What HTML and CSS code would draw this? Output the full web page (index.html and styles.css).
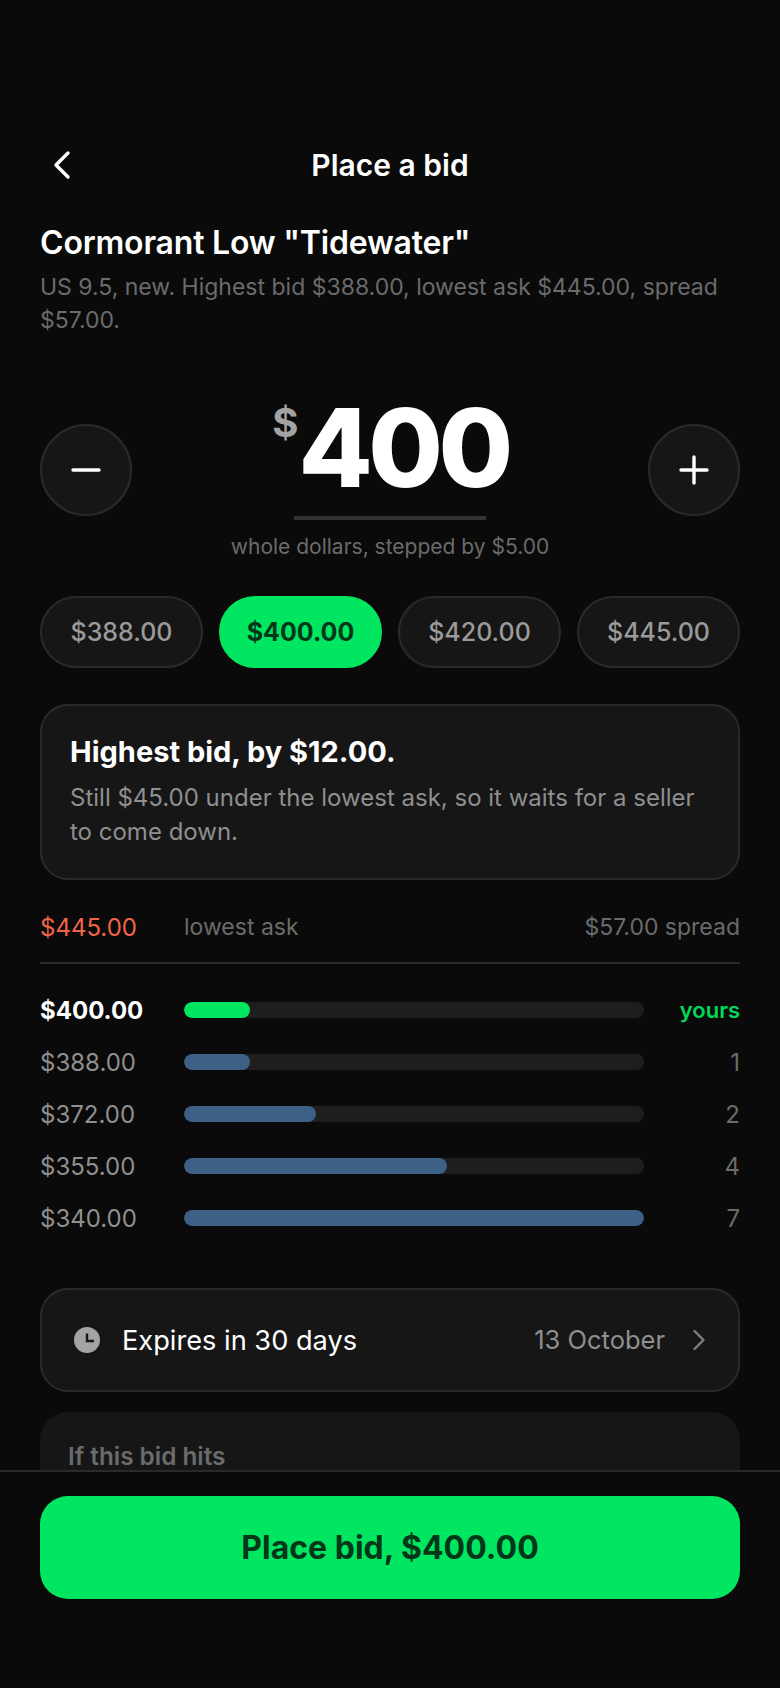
FILE: index.html
```html
<!DOCTYPE html>
<html lang="en">
<head>
    <meta charset="UTF-8">
    <meta name="viewport" content="width=device-width, initial-scale=1.0">
    <title>Place a bid</title>
    <link rel="stylesheet" href="styles.css">
</head>
<body>
    <div class="screen">
        <div class="content">
            <div class="nav">
                <svg class="back" width="28" height="32" viewBox="0 0 28 32" fill="none"><path d="M20 4 8 16l12 12" stroke="#fff" stroke-width="3.4" stroke-linecap="round" stroke-linejoin="round"/></svg>
                <h1>Place a bid</h1>
            </div>

            <h2 class="product">Cormorant Low "Tidewater"</h2>
            <p class="summary">US 9.5, new. Highest bid $388.00, lowest ask $445.00, spread $57.00.</p>

            <div class="stepper">
                <button class="round-btn">
                    <svg width="32" height="32" viewBox="0 0 32 32" fill="none"><path d="M3 16h26" stroke="#fff" stroke-width="3.4" stroke-linecap="round"/></svg>
                </button>
                <div class="amount-wrap">
                    <div class="amount"><span class="currency">$</span><span class="digits">400</span></div>
                    <div class="amount-line"></div>
                </div>
                <button class="round-btn">
                    <svg width="32" height="32" viewBox="0 0 32 32" fill="none"><path d="M3 16h26M16 3v26" stroke="#fff" stroke-width="3.4" stroke-linecap="round"/></svg>
                </button>
            </div>
            <p class="hint">whole dollars, stepped by $5.00</p>

            <div class="chips">
                <div class="chip">$388.00</div>
                <div class="chip active">$400.00</div>
                <div class="chip">$420.00</div>
                <div class="chip">$445.00</div>
            </div>

            <div class="status-card">
                <h3>Highest bid, by $12.00.</h3>
                <p>Still $45.00 under the lowest ask, so it waits for a seller to come down.</p>
            </div>

            <div class="ask-row">
                <span class="ask-price">$445.00</span>
                <span class="ask-label">lowest ask</span>
                <span class="ask-spread">$57.00 spread</span>
            </div>

            <div class="ladder">
                <div class="ladder-row mine">
                    <span class="price">$400.00</span>
                    <div class="track"><div class="fill green" style="width: 14.3%"></div></div>
                    <span class="count">yours</span>
                </div>
                <div class="ladder-row">
                    <span class="price">$388.00</span>
                    <div class="track"><div class="fill" style="width: 14.3%"></div></div>
                    <span class="count">1</span>
                </div>
                <div class="ladder-row">
                    <span class="price">$372.00</span>
                    <div class="track"><div class="fill" style="width: 28.6%"></div></div>
                    <span class="count">2</span>
                </div>
                <div class="ladder-row">
                    <span class="price">$355.00</span>
                    <div class="track"><div class="fill" style="width: 57.1%"></div></div>
                    <span class="count">4</span>
                </div>
                <div class="ladder-row">
                    <span class="price">$340.00</span>
                    <div class="track"><div class="fill" style="width: 100%"></div></div>
                    <span class="count">7</span>
                </div>
            </div>

            <div class="expiry">
                <svg class="clock" width="26" height="26" viewBox="0 0 26 26"><circle cx="13" cy="13" r="13" fill="#a3a3a3"/><path d="M13 6.5V14h7" fill="none" stroke="#161616" stroke-width="2.4"/></svg>
                <span class="expiry-label">Expires in 30 days</span>
                <span class="expiry-date">13 October</span>
                <svg class="chevron" width="14" height="22" viewBox="0 0 14 22" fill="none"><path d="M2.5 2 11.5 11l-9 9" stroke="#7d7d7d" stroke-width="2.4" stroke-linecap="round" stroke-linejoin="round"/></svg>
            </div>

            <div class="hits-card">
                <h4>If this bid hits</h4>
            </div>
        </div>

        <div class="footer">
            <button class="place-btn">Place bid, $400.00</button>
        </div>
    </div>
</body>
</html>
```

FILE: styles.css
```css
* {
    box-sizing: border-box;
}
html, body {
    margin: 0;
    padding: 0;
    background-color: #0a0a0a;
}
body {
    font-family: Inter, "Liberation Sans", sans-serif;
    color: #fff;
}
.screen {
    width: 780px;
    height: 1688px;
    display: flex;
    flex-direction: column;
    overflow: hidden;
}
.content {
    flex: 1;
    min-height: 0;
    overflow: hidden;
    padding: 140px 40px 0;
}
.nav {
    position: relative;
    height: 50px;
    display: flex;
    align-items: center;
    justify-content: center;
    margin-bottom: 32px;
}
.back {
    position: absolute;
    left: 8px;
    top: 9px;
}
.nav h1 {
    margin: 0;
    font-size: 30px;
    font-weight: 600;
}
.product {
    margin: 0;
    font-size: 32px;
    letter-spacing: -0.2px;
    line-height: 42px;
    font-weight: 600;
}
.summary {
    margin: 7px 0 0;
    font-size: 23px;
    line-height: 33px;
    color: #6b6b6b;
}
.stepper {
    display: flex;
    justify-content: space-between;
    margin-top: 53px;
    height: 130px;
}
.round-btn {
    width: 92px;
    height: 92px;
    margin-top: 34px;
    padding: 0;
    border-radius: 50%;
    border: 2px solid #2a2a2a;
    background-color: #161616;
    display: flex;
    align-items: center;
    justify-content: center;
}
.amount-wrap {
    display: flex;
    flex-direction: column;
    align-items: center;
}
.amount {
    display: flex;
    align-items: flex-start;
    height: 124px;
    line-height: 116px;
    margin-left: 1px;
}
.currency {
    font-size: 40px;
    line-height: 66px;
    font-weight: 700;
    color: #a3a3a3;
}
.digits {
    font-size: 108px;
    font-weight: 800;
    letter-spacing: -4.5px;
}
.amount-line {
    width: 192px;
    height: 4px;
    background-color: #333;
    margin-top: 2px;
}
.hint {
    margin: 12px 0 0;
    text-align: center;
    font-size: 21px;
    line-height: 30px;
    color: #6b6b6b;
}
.chips {
    display: flex;
    gap: 16px;
    margin-top: 34px;
}
.chip {
    flex: 1;
    height: 72px;
    border-radius: 36px;
    border: 2px solid #2a2a2a;
    background-color: #161616;
    color: #9a9a9a;
    font-size: 25px;
    font-weight: 500;
    display: flex;
    align-items: center;
    justify-content: center;
}
.chip.active {
    background-color: #00e660;
    border-color: #00e660;
    color: #04361a;
    font-weight: 700;
}
.status-card {
    margin-top: 36px;
    padding: 28px 28px 29px;
    background-color: #161616;
    border: 2px solid #2a2a2a;
    border-radius: 28px;
}
.status-card h3 {
    margin: 0;
    font-size: 29px;
    line-height: 36px;
    font-weight: 700;
}
.status-card p {
    margin: 11px 0 0;
    font-size: 24px;
    line-height: 34px;
    color: #8f8f8f;
}
.ask-row {
    display: flex;
    align-items: center;
    height: 84px;
    padding-top: 12px;
    border-bottom: 2px solid #2a2a2a;
    font-size: 23px;
}
.ask-price {
    width: 144px;
    font-size: 24px;
    color: #f0654a;
}
.ask-label {
    flex: 1;
    color: #6b6b6b;
}
.ask-spread {
    color: #6b6b6b;
}
.ladder {
    margin-top: 20px;
}
.ladder-row {
    display: flex;
    align-items: center;
    height: 52px;
    font-size: 24px;
    color: #8f8f8f;
}
.price {
    width: 144px;
}
.track {
    width: 460px;
    height: 16px;
    border-radius: 8px;
    background-color: #1e1e1e;
    overflow: hidden;
}
.fill {
    height: 100%;
    border-radius: 8px;
    background-color: #3d6087;
}
.fill.green {
    background-color: #00e660;
}
.count {
    flex: 1;
    text-align: right;
    color: #6b6b6b;
}
.mine .price {
    color: #fff;
    font-weight: 700;
}
.mine .count {
    font-size: 22px;
    color: #00d95a;
    font-weight: 600;
}
.expiry {
    margin-top: 44px;
    height: 104px;
    padding: 0 32px;
    display: flex;
    align-items: center;
    background-color: #161616;
    border: 2px solid #2a2a2a;
    border-radius: 28px;
}
.expiry-label {
    flex: 1;
    margin-left: 22px;
    font-size: 27.2px;
}
.expiry-date {
    font-size: 25.5px;
    padding-bottom: 2px;
    color: #8f8f8f;
}
.chevron {
    margin-left: 27px;
}
.hits-card {
    margin-top: 20px;
    height: 140px;
    padding: 30px 28px;
    background-color: #161616;
    border-radius: 28px;
}
.hits-card h4 {
    margin: 0;
    font-size: 24.3px;
    line-height: 28px;
    font-weight: 600;
    color: #6b6b6b;
}
.footer {
    flex: none;
    height: 218px;
    padding: 24px 40px 0;
    background-color: #0a0a0a;
    border-top: 2px solid #2a2a2a;
}
.place-btn {
    width: 100%;
    height: 103px;
    border: none;
    border-radius: 28px;
    background-color: #00e660;
    color: #04361a;
    font-family: inherit;
    font-size: 32px;
    font-weight: 700;
}
```
